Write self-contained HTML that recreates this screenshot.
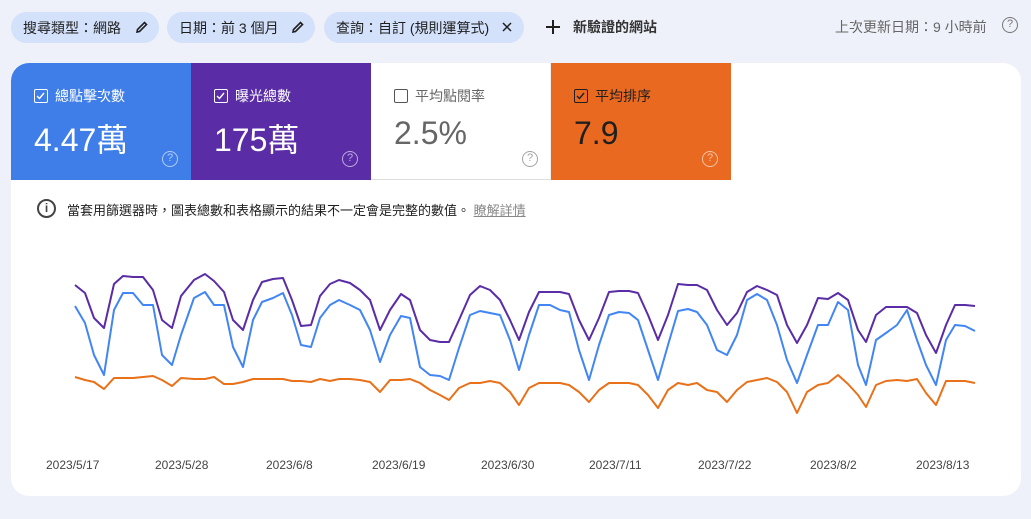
<!DOCTYPE html>
<html><head><meta charset="utf-8"><style>
*{box-sizing:border-box;margin:0;padding:0}
body{width:1031px;height:519px;background:#eef1fa;font-family:"Liberation Sans","Noto Sans CJK TC",sans-serif;position:relative;overflow:hidden;color:#1f1f1f}
.chip{position:absolute;top:12px;height:31px;border-radius:16px;background:#d3e1fb;font-size:14px;display:flex;align-items:center;padding:0 0 0 12px;color:#1f1f1f}
.chip svg{position:absolute;right:10px;top:8px}
.card{position:absolute;left:11px;top:63px;width:1010px;height:433px;background:#fff;border-radius:18px;overflow:hidden}
.tile{position:absolute;top:0;height:117px;width:180px}
.tile .lb{position:absolute;left:23px;top:23px;font-size:14px;display:flex;align-items:center}
.cb{width:14px;height:14px;border:1.5px solid currentColor;border-radius:2px;margin-right:7px;position:relative}
.cb svg{position:absolute;left:0;top:0}
.tile .v{position:absolute;left:23px;top:52px;font-size:32px}
.tile .q{position:absolute;left:151px;top:88px;width:16px;height:16px;border:1.5px solid currentColor;border-radius:50%;font-size:11px;text-align:center;line-height:13px;opacity:.6}
.dl{position:absolute;top:395px;font-size:12px;color:#444}
</style></head><body>
<div class="chip" style="left:11px;width:148px">搜尋類型：網路<svg width="14" height="14" viewBox="0 0 14 14"><path d="M2 12 L2.5 9.5 L9.5 2.5 L11.5 4.5 L4.5 11.5 Z" fill="none" stroke="#1f1f1f" stroke-width="1.6"/></svg></div>
<div class="chip" style="left:167px;width:148px">日期：前 3 個月<svg width="14" height="14" viewBox="0 0 14 14"><path d="M2 12 L2.5 9.5 L9.5 2.5 L11.5 4.5 L4.5 11.5 Z" fill="none" stroke="#1f1f1f" stroke-width="1.6"/></svg></div>
<div class="chip" style="left:324px;width:200px">查詢：自訂 (規則運算式)<svg width="14" height="14" viewBox="0 0 14 14"><path d="M3 3 L11 11 M11 3 L3 11" stroke="#1f1f1f" stroke-width="1.5"/></svg></div>
<svg style="position:absolute;left:545px;top:19px" width="16" height="16"><path d="M8 1 V15 M1 8 H15" stroke="#1f1f1f" stroke-width="2"/></svg>
<div style="position:absolute;left:573px;top:17px;font-size:14px;font-weight:bold;color:#333">新驗證的網站</div>
<div style="position:absolute;left:835px;top:17px;font-size:14px;color:#666">上次更新日期：9 小時前</div>
<div style="position:absolute;left:1002px;top:17px;width:16px;height:16px;border:1.5px solid #777;border-radius:50%;font-size:11px;color:#777;text-align:center;line-height:13px">?</div>
<div class="card">
<div class="tile" style="left:0;background:#3f7ee8;color:#fff"><div class="lb"><div class="cb"><svg width="11" height="11"><path d="M2 6 L4.5 8.5 L9 3" fill="none" stroke="#fff" stroke-width="1.4"/></svg></div>總點擊次數</div><div class="v">4.47萬</div><div class="q">?</div></div>
<div class="tile" style="left:180px;background:#5a2ca6;color:#fff"><div class="lb"><div class="cb"><svg width="11" height="11"><path d="M2 6 L4.5 8.5 L9 3" fill="none" stroke="#fff" stroke-width="1.4"/></svg></div>曝光總數</div><div class="v">175萬</div><div class="q">?</div></div>
<div class="tile" style="left:360px;background:#fff;color:#666;border-bottom:1px solid #ddd;border-right:1px solid #eee"><div class="lb"><div class="cb" style="color:#555"></div>平均點閱率</div><div class="v" style="color:#666">2.5%</div><div class="q">?</div></div>
<div class="tile" style="left:540px;background:#e8691f;color:#1f1f1f"><div class="lb"><div class="cb"><svg width="11" height="11"><path d="M2 6 L4.5 8.5 L9 3" fill="none" stroke="#1f1f1f" stroke-width="1.4"/></svg></div>平均排序</div><div class="v">7.9</div><div class="q" style="color:#fff">?</div></div>
<div style="position:absolute;left:26px;top:136px;width:19px;height:19px;border:2px solid #444;border-radius:50%;font-size:12px;font-weight:bold;text-align:center;line-height:15px;color:#444">i</div>
<div style="position:absolute;left:56px;top:137px;font-size:13px;color:#1f1f1f">當套用篩選器時，圖表總數和表格顯示的結果不一定會是完整的數值。 <span style="color:#888;text-decoration:underline">瞭解詳情</span></div>
<div class="dl" style="left:35px">2023/5/17</div><div class="dl" style="left:144px">2023/5/28</div><div class="dl" style="left:255px">2023/6/8</div><div class="dl" style="left:361px">2023/6/19</div><div class="dl" style="left:470px">2023/6/30</div><div class="dl" style="left:578px">2023/7/11</div><div class="dl" style="left:687px">2023/7/22</div><div class="dl" style="left:799px">2023/8/2</div><div class="dl" style="left:905px">2023/8/13</div>
</div>
<svg style="position:absolute;left:0;top:0" width="1031" height="519" fill="none" stroke-width="2" stroke-linejoin="round">
<polyline stroke="#5a2ca6" points="75,285 85,293 94,318 104,328 114,284 123,276 133,277 143,277 153,290 162,320 172,328 181,296 194,280 205,274 214,281 224,292 233,320 243,330 253,300 262,282 273,279 283,278 292,300 301,326 311,325 320,296 330,284 339,280 350,283 360,290 370,300 380,330 390,310 401,294 410,300 420,330 430,340 440,342 449,342 459,320 470,295 480,286 490,290 500,300 510,320 519,340 529,312 539,292 550,292 560,292 569,294 579,320 589,340 599,318 609,292 619,291 629,291 638,293 648,315 658,340 668,315 678,284 688,285 697,285 707,290 717,310 727,325 737,313 747,292 757,286 767,290 777,295 787,325 797,343 807,325 818,298 828,299 838,293 848,300 858,330 866,342 876,315 886,307 897,307 907,307 917,313 926,335 936,353 946,325 955,305 965,305 975,306"/>
<polyline stroke="#4285f4" points="75,306 85,323 94,355 104,375 114,310 123,293 133,293 143,305 153,305 162,355 172,365 181,335 194,298 205,292 214,305 224,305 233,347 243,367 253,320 262,302 273,298 283,293 292,315 301,345 311,347 320,318 330,305 339,300 350,305 360,310 370,330 380,362 390,335 401,316 410,318 420,367 430,375 440,376 449,380 459,348 470,315 480,311 490,313 500,315 510,340 519,370 529,335 539,305 550,305 560,310 569,312 579,350 589,380 599,345 609,315 619,312 629,313 638,320 648,350 658,380 668,345 678,311 688,309 697,312 707,325 717,350 727,355 737,335 747,300 757,294 767,300 777,325 787,360 797,383 807,355 818,325 828,325 838,302 848,310 858,365 866,385 876,340 886,333 897,325 907,310 917,340 926,365 936,385 946,340 955,325 965,326 975,331"/>
<polyline stroke="#e8711a" points="75,377 85,380 94,382 104,389 114,378 123,378 133,378 143,377 153,376 162,380 172,386 181,378 194,379 205,379 214,377 224,384 233,384 243,382 253,379 262,379 273,379 283,379 292,381 301,381 311,382 320,379 330,381 339,379 350,379 360,380 370,382 380,392 390,380 401,380 410,379 420,383 430,390 440,395 449,400 459,388 470,383 480,383 490,381 500,383 510,392 519,405 529,388 539,383 550,383 560,383 569,385 579,392 589,402 599,390 609,383 619,383 629,383 638,385 648,395 658,408 668,390 678,383 688,385 697,383 707,390 717,392 727,402 737,390 747,382 757,380 767,378 777,382 787,392 797,413 807,392 818,385 828,383 838,375 848,384 858,395 866,407 876,385 886,381 897,380 907,381 917,379 926,393 936,405 946,381 955,381 965,381 975,383"/>
</svg>
</body></html>
